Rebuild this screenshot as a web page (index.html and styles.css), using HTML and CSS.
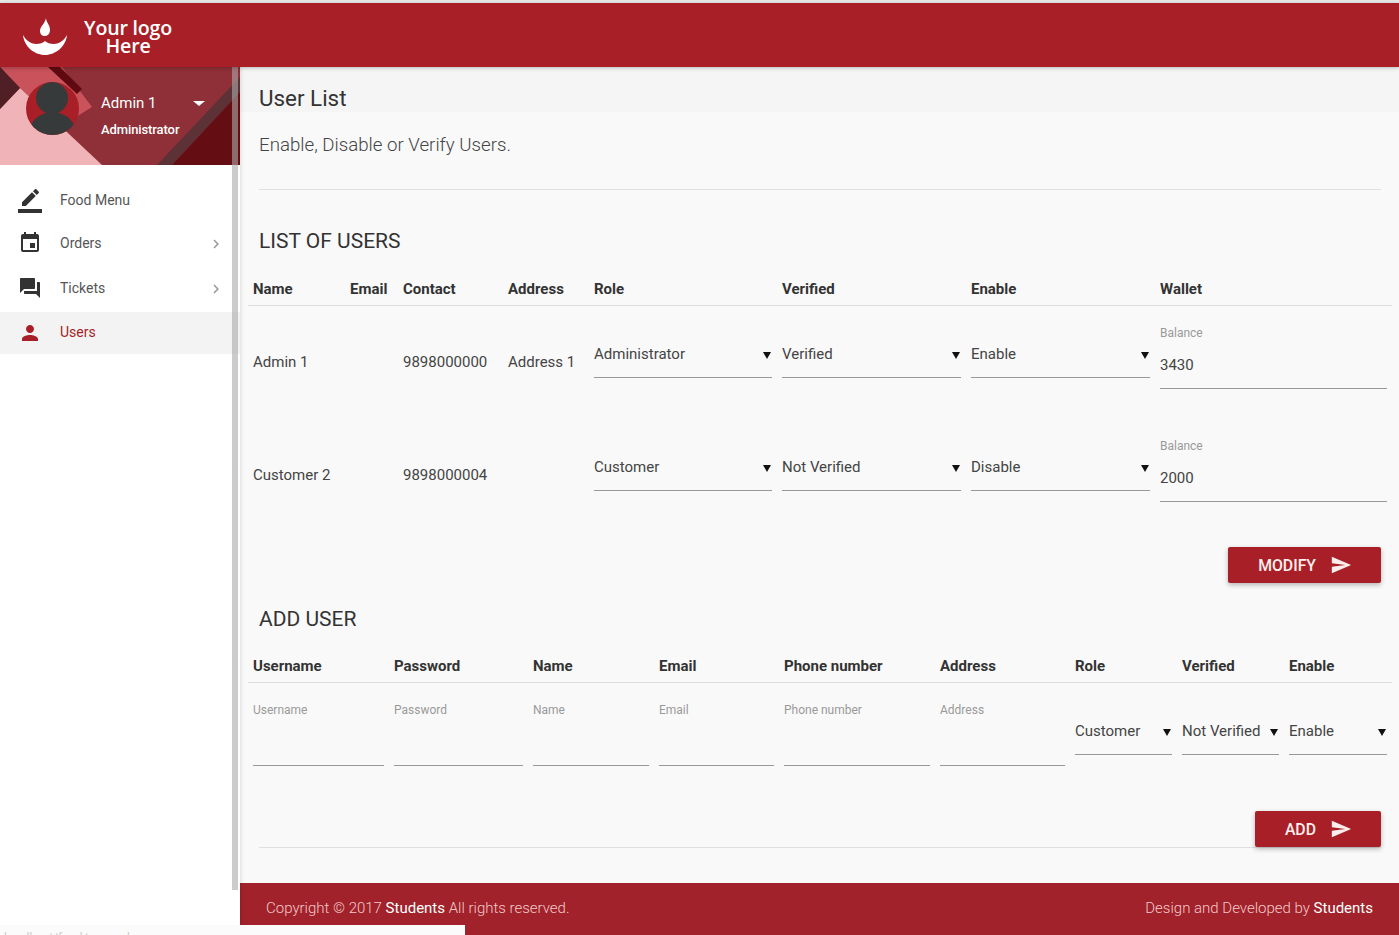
FILE: index.html
```html
<!DOCTYPE html>
<html lang="en">
<head>
<meta charset="utf-8">
<title>User List</title>
<link rel="stylesheet" href="styles.css">
</head>
<body>
<header class="topbar">
  <a class="brand" href="#">
    <svg class="brand-mark" width="48" height="42" viewBox="0 0 48 42">
      <path fill="#fff" d="M25 1C25 5 29 8 29 13C29 16 27 19 24 19C21 19 19 17 19 14C19 9 24 7 25 1z"/>
      <path fill="#fff" d="M2 18C5 24 11 27 15 27C19 27 22 26 24 24C26 26 29 27 33 27C37 27 43 24 46 18C45 29 35 38 24 38S3 29 2 18z"/>
    </svg>
    <span class="brand-text">Your logo<br>Here</span>
  </a>
</header>
<div class="layout">
  <aside class="sidebar">
    <div class="profile">
      <svg class="profile-bg" width="240" height="98" viewBox="0 0 240 98">
        <rect width="240" height="98" fill="#8f2f37"/>
        <polygon fill="#c9525b" points="0,0 62,0 92,40 60,60 20,21"/>
        <polygon fill="#f0b3b7" points="0,42 20,21 102,98 0,98"/>
        <polygon fill="#4f1f25" points="0,0 20,21 0,42"/>
        <polygon fill="#5f0a10" points="48,0 60,0 82,22 77,27"/>
        <polygon fill="#5c3237" points="240,10 157,98 172,98 240,25"/>
        <polygon fill="#640d12" points="240,25 172,98 240,98"/>
      </svg>
      <svg class="avatar" width="53" height="53" viewBox="0 0 53 53">
        <defs><clipPath id="avatar-clip"><circle cx="26.500" cy="26.500" r="26.500"/></clipPath></defs>
        <g clip-path="url(#avatar-clip)">
          <rect width="53" height="53" fill="#a81f27"/>
          <ellipse cx="26" cy="16" rx="16" ry="16" fill="#363a3b"/>
          <path fill="#363a3b" d="M5 43C8 37 13 33 20 31H33C40 33 45 37 48 43V53H5z"/>
        </g>
      </svg>
      <div class="profile-info">
        <div class="profile-name">Admin 1</div>
        <div class="profile-role">Administrator</div>
      </div>
      <span class="caret"></span>
    </div>
    <nav class="menu">
      <a class="menu-item item-food" href="#">
        <svg class="menu-icon" viewBox="0 0 24 24"><path d="M17.750 7L14 3.250l-10 10V17h3.750l10-10zm2.960-2.960c.39-.39.39-1.020 0-1.410L18.370.29c-.39-.39-1.020-.39-1.410 0L15 2.250 18.750 6l1.960-1.960z"/><path d="M0 20h24v4H0z"/></svg>
        <span>Food Menu</span>
      </a>
      <a class="menu-item item-orders" href="#">
        <svg class="menu-icon" viewBox="0 0 24 24"><path d="M17 12h-5v5h5v-5zM16 1v2H8V1H6v2H5c-1.110 0-1.990.9-1.990 2L3 19c0 1.100.89 2 2 2h14c1.100 0 2-.9 2-2V5c0-1.100-.9-2-2-2h-1V1h-2zm3 18H5V8h14v11z"/></svg>
        <span>Orders</span>
        <svg class="chevron" viewBox="0 0 24 24"><path d="M10 6L8.590 7.410 13.170 12l-4.580 4.590L10 18l6-6z"/></svg>
      </a>
      <a class="menu-item item-tickets" href="#">
        <svg class="menu-icon" viewBox="0 0 24 24"><path d="M21 6h-2v9H6v2c0 .55.45 1 1 1h11l4 4V7c0-.55-.45-1-1-1zm-4 6V3c0-.55-.45-1-1-1H3c-.55 0-1 .45-1 1v14l4-4h10c.55 0 1-.45 1-1z"/></svg>
        <span>Tickets</span>
        <svg class="chevron" viewBox="0 0 24 24"><path d="M10 6L8.590 7.410 13.170 12l-4.580 4.590L10 18l6-6z"/></svg>
      </a>
      <a class="menu-item is-active" href="#">
        <svg class="menu-icon" viewBox="0 0 24 24"><path d="M12 12c2.210 0 4-1.790 4-4s-1.790-4-4-4-4 1.790-4 4 1.790 4 4 4zm0 2c-2.670 0-8 1.340-8 4v2h16v-2c0-2.660-5.330-4-8-4z"/></svg>
        <span>Users</span>
      </a>
    </nav>
    <div class="scroll-thumb"></div>
  </aside>
  <main class="main">
    <div class="page-title"><h1>User List</h1></div>
    <div class="content">
      <p class="lead">Enable, Disable or Verify Users.</p>
      <hr class="rule rule-top">
      <h2 class="section-title section-list">LIST OF USERS</h2>
      <div class="grid users-grid grid-head">
        <div>Name</div><div>Email</div><div>Contact</div><div>Address</div><div>Role</div><div>Verified</div><div>Enable</div><div>Wallet</div>
      </div>
      <div class="grid users-grid grid-row">
        <div>Admin 1</div><div></div><div>9898000000</div><div>Address 1</div>
        <div><div class="select-field tall"><select><option>Administrator</option></select></div></div>
        <div><div class="select-field tall"><select><option>Verified</option></select></div></div>
        <div><div class="select-field tall"><select><option>Enable</option></select></div></div>
        <div><label class="balance"><span class="field-label">Balance</span><input type="text" value="3430"></label></div>
      </div>
      <div class="grid users-grid grid-row">
        <div>Customer 2</div><div></div><div>9898000004</div><div></div>
        <div><div class="select-field tall"><select><option>Customer</option></select></div></div>
        <div><div class="select-field tall"><select><option>Not Verified</option></select></div></div>
        <div><div class="select-field tall"><select><option>Disable</option></select></div></div>
        <div><label class="balance"><span class="field-label">Balance</span><input type="text" value="2000"></label></div>
      </div>
      <div class="actions actions-modify">
        <button class="btn" type="button">MODIFY
          <svg viewBox="0 0 24 24"><path d="M2.010 21L23 12 2.010 3 2 10l15 2-15 2z"/></svg>
        </button>
      </div>
      <h2 class="section-title section-add">ADD USER</h2>
      <div class="grid add-grid grid-head">
        <div>Username</div><div>Password</div><div>Name</div><div>Email</div><div>Phone number</div><div>Address</div><div>Role</div><div>Verified</div><div>Enable</div>
      </div>
      <div class="grid add-grid add-row">
        <label class="text-field"><span class="field-label">Username</span><input type="text"></label>
        <label class="text-field"><span class="field-label">Password</span><input type="password"></label>
        <label class="text-field"><span class="field-label">Name</span><input type="text"></label>
        <label class="text-field"><span class="field-label">Email</span><input type="text"></label>
        <label class="text-field"><span class="field-label">Phone number</span><input type="text"></label>
        <label class="text-field"><span class="field-label">Address</span><input type="text"></label>
        <div class="select-field"><select><option>Customer</option></select></div>
        <div class="select-field"><select><option>Not Verified</option></select></div>
        <div class="select-field"><select><option>Enable</option></select></div>
      </div>
      <div class="actions actions-add">
        <button class="btn" type="button">ADD
          <svg viewBox="0 0 24 24"><path d="M2.010 21L23 12 2.010 3 2 10l15 2-15 2z"/></svg>
        </button>
      </div>
      <hr class="rule">
    </div>
    <footer class="footer">
      <span>Copyright © 2017 <b>Students</b> All rights reserved.</span>
      <span>Design and Developed by <b>Students</b></span>
    </footer>
  </main>
</div>
<div class="status-bubble">localhost/food/users.php</div>
</body>
</html>
```
FILE: styles.css
```css
* { box-sizing: border-box; }
html, body { height: 100%; }
body {
  margin: 0;
  height: 935px;
  overflow: hidden;
  display: flex;
  flex-direction: column;
  padding-top: 3px;
  background: #e8e8e8;
  font-family: Roboto, "Liberation Sans", sans-serif;
  font-size: 15px;
  color: #444;
}
a { color: inherit; text-decoration: none; }

.topbar {
  height: 64px;
  flex: none;
  background: #a81f27;
  position: relative;
  z-index: 3;
  box-shadow: 0 1px 4px rgba(0,0,0,.25);
}
.brand { display: flex; align-items: flex-start; height: 100%; color: #fff; }
.brand-mark { margin: 14px 0 0 21px; flex: none; }
.brand-text {
  margin: 16px 0 0 15px;
  width: 88px;
  text-align: center;
  font-family: "Open Sans", sans-serif;
  font-weight: 600;
  font-size: 19.600px;
  line-height: 18px;
  letter-spacing: -.2px;
}

.layout { flex: 1; display: flex; min-height: 0; }
.sidebar {
  width: 240px;
  flex: none;
  background: #fff;
  position: relative;
  z-index: 2;
  box-shadow: 1px 0 4px rgba(0,0,0,.12);
}
.profile {
  height: 98px;
  position: relative;
  display: flex;
  align-items: flex-start;
  padding: 15px 0 0 26px;
  color: #fff;
}
.profile-bg { position: absolute; left: 0; top: 0; }
.avatar { position: relative; flex: none; }
.profile-info { position: relative; margin-left: 22px; padding-top: 12px; }
.profile-name { font-size: 15px; line-height: 18px; }
.profile-role { font-size: 13px; font-weight: 500; line-height: 16px; margin-top: 10px; letter-spacing: -.1px; }
.caret {
  position: absolute;
  left: 193px;
  top: 34px;
  border-left: 6px solid transparent;
  border-right: 6px solid transparent;
  border-top: 5px solid #fff;
}
.menu { display: flex; flex-direction: column; padding-top: 13px; }
.menu-item {
  height: 44px;
  display: flex;
  align-items: center;
  padding: 0 15px 0 18px;
  font-size: 14px;
  color: #555;
}
.menu-item span { margin-left: 18px; flex: 1; }
.menu-icon { width: 24px; height: 24px; fill: #333; flex: none; }
.chevron { width: 18px; height: 18px; fill: #999; flex: none; margin-top: 2px; }
.item-food .menu-icon { margin-top: 2px; }
.item-orders { height: 42px; }
.item-tickets { height: 48px; }
.menu-item.is-active {
  height: 42px;
  background: #f3f3f3;
  color: #a81f27;
}
.is-active span { padding-bottom: 2px; }
.is-active .menu-icon { fill: #a81f27; }
.scroll-thumb {
  position: absolute;
  left: 232px;
  top: 0;
  width: 6px;
  height: 823px;
  background: rgba(170,170,170,.6);
}

.main {
  flex: 1;
  min-width: 0;
  display: flex;
  flex-direction: column;
  background: #f9f9f9;
}
.page-title {
  height: 45px;
  padding: 18px 19px 0;
  background: #f5f5f5;
}
.page-title h1 { margin: 0; font-size: 22.400px; font-weight: 400; line-height: 26px; color: #333; }
.content { flex: 1; padding: 0 18px 0 19px; min-height: 0; }
.lead { margin: 0; padding-top: 21px; font-size: 18.700px; font-weight: 300; line-height: 24px; color: #444; }
.rule { margin: 0; border: 0; border-top: 1px solid #e0e0e0; }
.rule-top { margin-top: 32px; }
.section-title { margin: 0; font-size: 21px; font-weight: 400; line-height: 26px; color: #333; }
.section-list { padding-top: 38px; }
.section-add { padding-top: 23px; }

.grid { display: grid; margin: 0 -11px; }
.grid > div, .grid > label { padding: 0 5px; min-width: 0; }
.users-grid { grid-template-columns: 97px 53px 105px 86px 188px 189px 189px 237px; }
.add-grid { grid-template-columns: 141px 139px 126px 125px 156px 135px 107px 107px 108px; }
.grid-head {
  height: 34px;
  align-items: center;
  border-bottom: 1px solid #ddd;
  font-weight: 700;
  color: #333;
}
.section-list + .grid-head { margin-top: 18px; }
.section-add + .grid-head { margin-top: 17px; }
.grid-row { height: 113px; align-items: center; padding-bottom: 2px; }

select, input {
  display: block;
  width: 100%;
  border: 0;
  background: none;
  outline: 0;
  padding: 0;
  margin: 0;
  font: inherit;
  color: #444;
  appearance: none;
  border-radius: 0;
}
.select-field {
  position: relative;
  height: 47px;
  padding-top: 14px;
  border-bottom: 1px solid #999;
}
.select-field select { height: 18px; line-height: 18px; }
.select-field::after {
  content: "";
  position: absolute;
  right: 1px;
  top: 21px;
  border-left: 4px solid transparent;
  border-right: 4px solid transparent;
  border-top: 7px solid #111;
}
.select-field.tall { margin-bottom: 14px; }
.balance { display: block; margin-bottom: 7px; height: 63px; border-bottom: 1px solid #999; }
.field-label { display: block; font-size: 12px; line-height: 14px; color: #999; }
.balance .field-label { margin-top: -1px; }
.balance input { height: 20px; margin-top: 15px; }

.add-row { height: 96px; align-items: start; }
.text-field { display: block; }
.add-row .text-field .field-label { margin-top: 20px; }
.text-field input { height: 49px; border-bottom: 1px solid #999; }
.add-row .text-field { height: 83px; }
.add-row .select-field { margin: 24px 5px 0; height: 48px; padding: 15px 0 0; }
.add-row .select-field::after { top: 22px; }

.actions { display: flex; justify-content: flex-end; }
.actions-modify { padding-top: 15px; }
.actions-add { padding-top: 32px; }
.btn {
  height: 36px;
  display: flex;
  align-items: center;
  gap: 14px;
  padding: 0 29px 0 30px;
  border: 0;
  border-radius: 2px;
  background: #a81f27;
  color: #fdeeee;
  font: 500 15.800px Roboto, sans-serif;
  box-shadow: 0 2px 5px rgba(0,0,0,.28);
}
.btn svg { width: 22px; height: 22px; fill: #fdeeee; flex: none; }

.footer {
  height: 52px;
  flex: none;
  display: flex;
  justify-content: space-between;
  align-items: center;
  padding: 0 26px 2px;
  background: #a1222a;
  color: #f3c9cc;
  font-size: 15px;
  font-weight: 300;
}
.footer b { font-weight: 400; color: #fff; }

.status-bubble {
  position: fixed;
  left: 0;
  bottom: 0;
  width: 465px;
  height: 10px;
  overflow: hidden;
  z-index: 5;
  background: #fbfbfb;
  color: #ccc;
  font-size: 12px;
  line-height: 16px;
  padding: 5px 0 0 4px;
}
```
